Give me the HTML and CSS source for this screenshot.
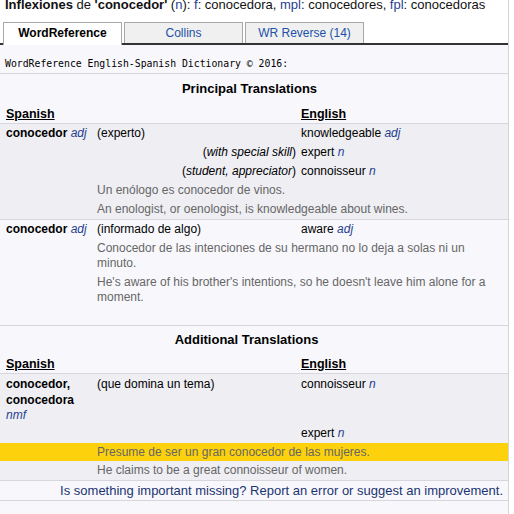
FILE: index.html
```html
<!DOCTYPE html>
<html>
<head>
<meta charset="utf-8">
<link rel="stylesheet" href="styles.css">
</head>
<body>
<div class="page">
  <div class="infl"><b>Inflexiones</b> de <b>'conocedor'</b> (<span class="pos">n</span>): <span class="pos">f</span>: conocedora, <span class="pos">mpl</span>: conocedores, <span class="pos">fpl</span>: conocedoras</div>
  <div class="tabs">
    <div class="tab active">WordReference</div>
    <div class="tab">Collins</div>
    <div class="tab">WR Reverse (14)</div>
  </div>
  <div class="panel">
    <div class="dictline">WordReference English-Spanish Dictionary © 2016:</div>
    <table class="wrd">
      <colgroup><col class="c1"><col class="c2"><col class="c3"></colgroup>
      <tr class="section first"><td colspan="3">Principal Translations</td></tr>
      <tr class="lang"><td>Spanish</td><td></td><td>English</td></tr>

      <tr class="even"><td><b>conocedor</b> <i class="pos">adj</i></td><td>(experto)</td><td>knowledgeable <i class="pos">adj</i></td></tr>
      <tr class="even"><td></td><td class="note">(<i>with special skill</i>)</td><td>expert <i class="pos">n</i></td></tr>
      <tr class="even"><td></td><td class="note">(<i>student, appreciator</i>)</td><td>connoisseur <i class="pos">n</i></td></tr>
      <tr class="even"><td></td><td colspan="2" class="ex">Un enólogo es conocedor de vinos.</td></tr>
      <tr class="even"><td></td><td colspan="2" class="ex">An enologist, or oenologist, is knowledgeable about wines.</td></tr>

      <tr class="odd top"><td><b>conocedor</b> <i class="pos">adj</i></td><td>(informado de algo)</td><td>aware <i class="pos">adj</i></td></tr>
      <tr class="odd"><td></td><td colspan="2" class="ex">Conocedor de las intenciones de su hermano no lo deja a solas ni un minuto.</td></tr>
      <tr class="odd"><td></td><td colspan="2" class="ex">He's aware of his brother's intentions, so he doesn't leave him alone for a moment.</td></tr>

      <tr class="spacer"><td colspan="3"></td></tr>
      <tr class="section second"><td colspan="3">Additional Translations</td></tr>
      <tr class="lang"><td>Spanish</td><td></td><td>English</td></tr>

      <tr class="even multi"><td><b>conocedor, conocedora</b> <i class="pos">nmf</i></td><td>(que domina un tema)</td><td>connoisseur <i class="pos">n</i></td></tr>
      <tr class="even"><td></td><td></td><td>expert <i class="pos">n</i></td></tr>
      <tr class="hl"><td></td><td colspan="2" class="ex">Presume de ser un gran conocedor de las mujeres.</td></tr>
      <tr class="even last"><td></td><td colspan="2" class="ex">He claims to be a great connoisseur of women.</td></tr>

      <tr class="report"><td colspan="3">Is something important missing? Report an error or suggest an improvement.</td></tr>
    </table>
  </div>
</div>
</body>
</html>
```

FILE: styles.css
```css
body {
  margin: 0;
  background: #ffffff;
  font-family: "Liberation Sans", Arial, sans-serif;
  font-size: 12px;
  color: #000;
}

.page {
  width: 508px;
  border-right: 1px solid #d4d4da;
  overflow: hidden;
}

.infl {
  font-size: 13px;
  line-height: 15px;
  margin-top: -3px;
  padding-left: 5px;
  white-space: nowrap;
  color: #111;
}

.pos {
  color: #1f3f8f;
}

.tabs {
  display: flex;
  align-items: flex-end;
  gap: 2px;
  margin-top: 10px;
  padding-left: 3px;
  height: 21px;
  border-bottom: 2px solid #333;
}

.tab {
  box-sizing: border-box;
  width: 119px;
  height: 21px;
  border: 1px solid #a8a8a8;
  border-bottom: none;
  background: #f0f0f0;
  color: #2150a8;
  text-align: center;
  line-height: 20px;
}

.tab.active {
  height: 23px;
  margin-bottom: -2px;
  background: #fff;
  color: #000;
  font-weight: bold;
}

.panel {
  background: #f8f8fc;
  min-height: 480px;
}

.dictline {
  font-family: "DejaVu Sans Mono", "Liberation Mono", monospace;
  font-size: 9.8px;
  line-height: 14px;
  padding: 12px 5px 2px;
  border-bottom: 1px solid #d6d6dc;
}

.wrd {
  width: 508px;
  table-layout: fixed;
  border-collapse: separate;
  border-spacing: 0;
}

.c1 { width: 92px; }
.c2 { width: 207px; }
.c3 { width: 209px; }

.wrd td {
  padding: 2px 3px 2px 5px;
  line-height: 15px;
  vertical-align: top;
}

.wrd td:first-child {
  padding-left: 6px;
}

.wrd td:nth-child(3) {
  padding-left: 2px;
}

.section td {
  text-align: center;
  font-size: 13px;
  font-weight: bold;
  line-height: 16px;
  padding: 7px 15px 4px 0;
}

.section.second td {
  border-top: 1px solid #d6d6dc;
  padding: 6px 15px 3px 0;
}

.lang td {
  font-size: 12.5px;
  font-weight: bold;
  text-decoration: underline;
  line-height: 16px;
  padding-top: 5px;
  padding-bottom: 1px;
  border-bottom: 1px solid #d6d6dc;
}

.even td {
  background: #eeeef3;
}

.odd.top td {
  border-top: 1px solid #d6d6dc;
}

.note {
  text-align: right;
}

.wrd td.ex {
  color: #666;
  padding-right: 6px;
}

.spacer td {
  height: 18px;
  padding: 0;
}

.multi td {
  line-height: 15.5px;
  padding-top: 3px;
  padding-bottom: 0;
}

.hl td {
  background: #fdd20c;
  padding-bottom: 1.5px;
}

.last td {
  border-bottom: 1px solid #d6d6dc;
}

.report td {
  text-align: right;
  font-size: 13px;
  color: #1a3470;
  padding-right: 5px;
  border-bottom: 1px solid #d6d6dc;
}
```
